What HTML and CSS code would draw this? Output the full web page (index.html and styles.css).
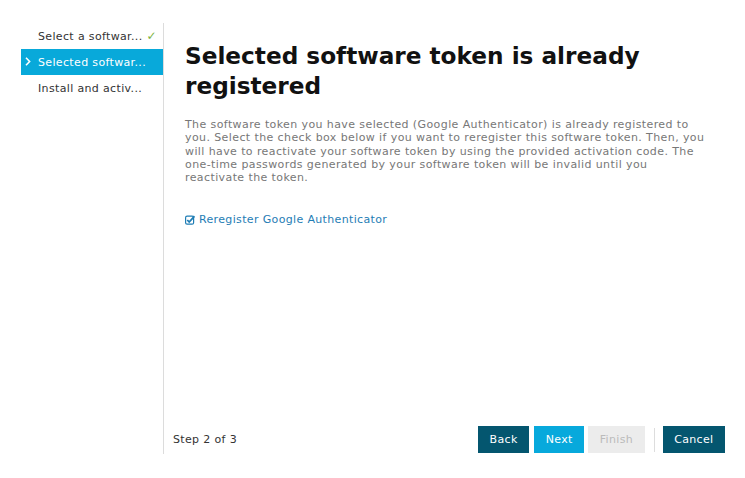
FILE: index.html
```html
<!DOCTYPE html>
<html>
<head>
<meta charset="utf-8">
<link rel="stylesheet" href="styles.css">
</head>
<body>
<div class="wizard">
  <nav class="steps">
    <div class="step done"><span class="step-label">Select a softwar...</span><span class="check">✓</span></div>
    <div class="step active"><svg class="chev" width="6" height="9" viewBox="0 0 6 9"><path d="M1 0.8 L4.6 4.5 L1 8.2" fill="none" stroke="#fff" stroke-width="1.6"/></svg><span class="step-label">Selected softwar...</span></div>
    <div class="step"><span class="step-label">Install and activ...</span></div>
  </nav>
  <section class="main">
    <div class="content">
      <h1 class="title">Selected software token is already registered</h1>
      <p class="desc">The software token you have selected (Google Authenticator) is already registered to you. Select the check box below if you want to reregister this software token. Then, you will have to reactivate your software token by using the provided activation code. The one-time passwords generated by your software token will be invalid until you reactivate the token.</p>
      <label class="reg">
        <svg class="cb" width="10" height="10" viewBox="0 0 10 10"><rect x="0.6" y="1.2" width="8" height="8" rx="1.5" fill="none" stroke="#1f7db5" stroke-width="1.2"/><path d="M2.3 5 L4.2 7 L9.5 1.2" fill="none" stroke="#1f7db5" stroke-width="1.8"/></svg>
        <span>Reregister Google Authenticator</span>
      </label>
    </div>
    <footer class="footer">
      <span class="stepcount">Step 2 of 3</span>
      <div class="buttons">
        <button class="btn dark">Back</button>
        <button class="btn blue">Next</button>
        <button class="btn disabled">Finish</button>
        <span class="sep"></span>
        <button class="btn dark">Cancel</button>
      </div>
    </footer>
  </section>
</div>
</body>
</html>
```
FILE: styles.css
```css
html, body { margin: 0; padding: 0; background: #fff; }
body { font-family: "DejaVu Sans", Verdana, sans-serif; font-size: 11px; letter-spacing: 0.35px; color: #333; }
.wizard { display: flex; padding: 23px 0 0 21px; height: 431px; }
.steps { width: 142px; border-right: 1px solid #dcdcdc; }
.step { height: 26px; display: flex; align-items: center; padding-left: 17px; font-size: 11px; color: #333; white-space: nowrap; position: relative; }
.step.active { background: #08a9da; color: #fff; }
.chev { position: absolute; left: 4px; top: 8px; }
.check { color: #7cb342; margin-left: 4px; font-size: 12px; }
.main { flex: 1; display: flex; flex-direction: column; }
.content { flex: 1; padding: 18px 20px 0 21px; }
.title { font-size: 23.2px; font-weight: bold; letter-spacing: 0; color: #111; margin: 0 0 17px; line-height: 30px; }
.desc { font-size: 11px; letter-spacing: 0.4px; line-height: 13.3px; color: #777; margin: 0 0 29px; width: 520px; }
.reg { display: flex; align-items: center; gap: 4px; font-size: 11px; color: #1f7db5; }
.footer { display: flex; align-items: center; justify-content: space-between; padding: 0 20px 0 9px; height: 27px; margin-bottom: 1px; }
.stepcount { font-size: 11px; color: #333; }
.buttons { display: flex; align-items: center; gap: 5px; }
.btn { border: none; height: 27px; font-family: "DejaVu Sans", Verdana, sans-serif; font-size: 11px; letter-spacing: 0.35px; padding: 0 11.5px; color: #fff; }
.btn.dark { background: #04566f; }
.btn.blue { background: #07a9dc; }
.btn.disabled { background: #ececec; color: #bbb; margin-left: -1px; }
.sep { width: 1px; height: 24px; background: #ddd; margin: 0 3px 0 4px; }
```
